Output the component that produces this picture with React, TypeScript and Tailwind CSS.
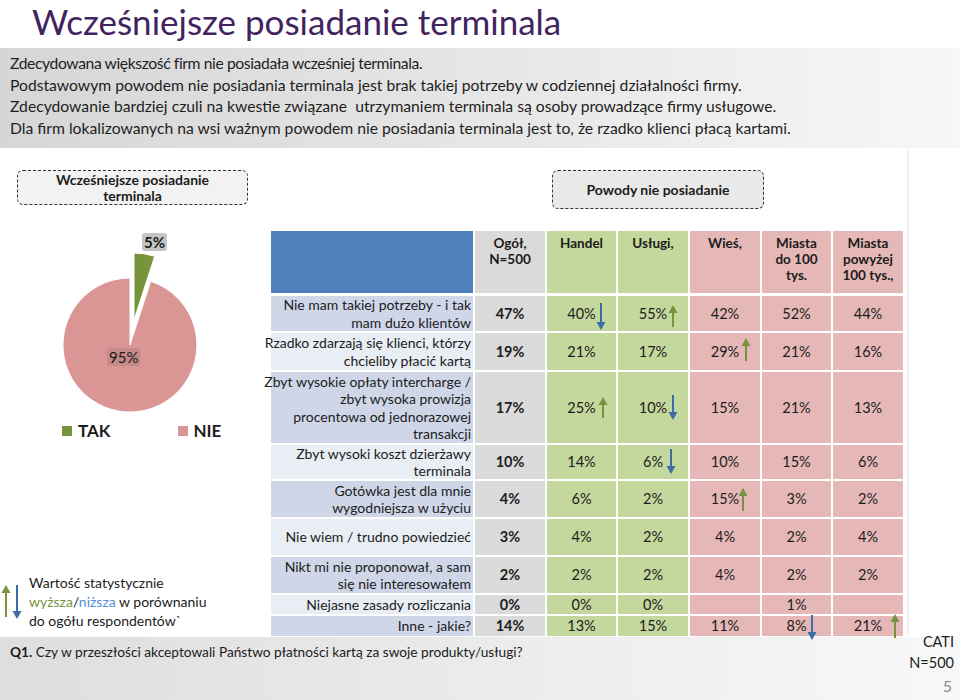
import React from 'react';

type Dir = 'up' | 'down';
type Mark = { col: number; dir: Dir; x: number; top: number; h: number };
type Row = { label: string[]; h: number; vals: string[]; marks?: Mark[] };

const GREEN = '#77933c';
const BLUE = '#3d6da6';

const rows: Row[] = [
    {
        label: ['Nie mam takiej potrzeby - i tak', 'mam dużo klientów'],
        h: 35,
        vals: ['47%', '40%', '55%', '42%', '52%', '44%'],
        marks: [
            { col: 1, dir: 'down', x: 54, top: 7, h: 27 },
            { col: 2, dir: 'up', x: 55, top: 9, h: 22 },
        ],
    },
    {
        label: ['Rzadko zdarzają się klienci, którzy', 'chcieliby płacić kartą'],
        h: 37,
        vals: ['19%', '21%', '17%', '29%', '21%', '16%'],
        marks: [{ col: 3, dir: 'up', x: 56, top: 5, h: 23 }],
    },
    {
        label: ['Zbyt wysokie opłaty intercharge /', 'zbyt wysoka prowizja', 'procentowa od jednorazowej', 'transakcji'],
        h: 71,
        vals: ['17%', '25%', '10%', '15%', '21%', '13%'],
        marks: [
            { col: 1, dir: 'up', x: 56, top: 25, h: 21 },
            { col: 2, dir: 'down', x: 55, top: 23, h: 25 },
        ],
    },
    {
        label: ['Zbyt wysoki koszt dzierżawy', 'terminala'],
        h: 34,
        vals: ['10%', '14%', '6%', '10%', '15%', '6%'],
        marks: [{ col: 2, dir: 'down', x: 53, top: 4, h: 25 }],
    },
    {
        label: ['Gotówka jest dla mnie', 'wygodniejsza w użyciu'],
        h: 36,
        vals: ['4%', '6%', '2%', '15%', '3%', '2%'],
        marks: [{ col: 3, dir: 'up', x: 53, top: 7, h: 23 }],
    },
    { label: ['Nie wiem / trudno powiedzieć'], h: 36, vals: ['3%', '4%', '2%', '4%', '2%', '4%'] },
    { label: ['Nikt mi nie proponował, a sam', 'się nie interesowałem'], h: 36, vals: ['2%', '2%', '2%', '4%', '2%', '2%'] },
    { label: ['Niejasne zasady rozliczania'], h: 19, vals: ['0%', '0%', '0%', '', '1%', ''] },
    {
        label: ['Inne - jakie?'],
        h: 20,
        vals: ['14%', '13%', '15%', '11%', '8%', '21%'],
        marks: [
            { col: 4, dir: 'down', x: 50, top: -1, h: 25 },
            { col: 5, dir: 'up', x: 62, top: -2, h: 24 },
        ],
    },
];

const colBg = ['bg-[#dadada]', 'bg-[#c4d79c]', 'bg-[#c4d79c]', 'bg-[#e5b8b7]', 'bg-[#e5b8b7]', 'bg-[#e5b8b7]'];

function Arrow({ dir, h, color }: { dir: Dir; h: number; color: string }) {
    return (
        <svg width="10" height={h} viewBox={`0 0 10 ${h}`}>
            {dir === 'up' ? (
                <>
                    <rect x="4" y="7" width="2" height={h - 7} fill={color} />
                    <path d="M0.5 8 L5 0 L9.5 8 Z" fill={color} />
                </>
            ) : (
                <>
                    <rect x="4" y="0" width="2" height={h - 7} fill={color} />
                    <path d={`M0.5 ${h - 8} L5 ${h} L9.5 ${h - 8} Z`} fill={color} />
                </>
            )}
        </svg>
    );
}

function PieChart() {
    return (
        <div className="relative h-[216px] w-[260px]">
            <svg width="260" height="216" viewBox="0 0 260 216">
                <path d="M130 140 L150.7 76.3 A67 67 0 1 1 130 73 Z" fill="#d99694" stroke="#fff" strokeWidth="1" />
                <path d="M134 115 L134 48 A67 67 0 0 1 154.7 51.3 Z" fill={GREEN} stroke="#fff" strokeWidth="1" />
            </svg>
            <span className="absolute top-[28px] left-[142px] rounded-[3px] bg-[#c4c4c4] px-[2px] text-[15px] leading-[18px] font-bold text-[#1a1a1a]">
                5%
            </span>
            <span className="absolute top-[143px] left-[107px] rounded-[3px] bg-[#c58a89] px-[2px] text-[15px] leading-[18px] text-[#1a1a1a]">
                95%
            </span>
        </div>
    );
}

export default function App() {
    return (
        <div className="relative h-[700px] w-[960px] overflow-hidden bg-white font-['Lato',sans-serif] text-[#1c1c1c]">
            {/* Title */}
            <div className="h-[48px] pl-[32px]">
                <h1 className="text-[35px] leading-[42px] text-[#41245f]">Wcześniejsze posiadanie terminala</h1>
            </div>

            {/* Summary band */}
            <div className="h-[100px] bg-gradient-to-r from-[#d6d6d6] via-[#e6e6e6] to-[#f7f7f7] pt-[5px] pl-[10px] text-[15.7px] leading-[21.5px] text-[#1e1e1e]">
                <p className="tracking-[-0.4px]">Zdecydowana większość firm nie posiadała wcześniej terminala.</p>
                <p>Podstawowym powodem nie posiadania terminala jest brak takiej potrzeby w codziennej działalności firmy.</p>
                <p>Zdecydowanie bardziej czuli na kwestie związane&nbsp; utrzymaniem terminala są osoby prowadzące firmy usługowe.</p>
                <p>Dla firm lokalizowanych na wsi ważnym powodem nie posiadania terminala jest to, że rzadko klienci płacą kartami.</p>
            </div>

            {/* Main */}
            <div className="flex h-[489px]">
                <div className="flex w-[260px] flex-col">
                    <div className="mt-[22px] ml-[17px] flex h-[35px] w-[231px] flex-col items-center justify-center rounded-[6px] border border-dashed border-[#333] bg-[#f2f2f2] text-[14px] leading-[16px] font-bold">
                        <span>Wcześniejsze posiadanie</span>
                        <span>terminala</span>
                    </div>
                    <PieChart />
                    <div className="flex h-[20px] items-center pl-[62px] text-[17px] font-bold">
                        <span className="h-[10px] w-[10px] bg-[#77933c]" />
                        <span className="ml-[6px]">TAK</span>
                        <span className="ml-[68px] h-[10px] w-[10px] bg-[#d99694]" />
                        <span className="ml-[5px]">NIE</span>
                    </div>
                    <div className="mt-auto flex items-center pb-[7px]">
                        <div className="flex w-[29px] items-start gap-[1px] pl-[1px]">
                            <Arrow dir="up" h={32} color={GREEN} />
                            <Arrow dir="down" h={34} color={BLUE} />
                        </div>
                        <div className="text-[14px] leading-[19px]">
                            <p>Wartość statystycznie</p>
                            <p>
                                <span className="text-[#77933c]">wyższa</span>/<span className="text-[#558ed5]">niższa</span> w porównaniu
                            </p>
                            <p>do ogółu respondentów`</p>
                        </div>
                    </div>
                </div>

                <div className="flex w-[647px] flex-col pl-[11px] shadow-[3px_0_3px_-2px_rgba(0,0,0,0.12)]">
                    <div className="mt-[22px] ml-[281px] flex h-[39px] w-[212px] items-center justify-center rounded-[6px] border border-dashed border-[#333] bg-[#e9e9e9] text-[14px] font-bold">
                        Powody nie posiadanie
                    </div>

                    <div className="mt-[22px] grid grid-cols-[202px_70px_69px_70px_70px_69px_70px] gap-x-[2px] gap-y-[2px]">
                        {/* header */}
                        <div className="mb-[1px] h-[62px] bg-[#4f81bd]" />
                        {[
                            ['Ogół,', 'N=500'],
                            ['Handel'],
                            ['Usługi,'],
                            ['Wieś,'],
                            ['Miasta', 'do 100', 'tys.'],
                            ['Miasta', 'powyżej', '100 tys.,'],
                        ].map((h, i) => (
                            <div key={i} className={`mb-[1px] h-[62px] ${colBg[i]} flex flex-col items-center pt-[4px] text-[13.5px] leading-[16px] font-bold`}>
                                {h.map((t) => (
                                    <span key={t}>{t}</span>
                                ))}
                            </div>
                        ))}

                        {rows.map((r, ri) => (
                            <React.Fragment key={ri}>
                                <div
                                    style={{ height: r.h }}
                                    className={`flex flex-col items-end justify-center pr-[2px] text-right text-[14px] leading-[17.5px] ${
                                        ri % 2 === 0 ? 'bg-[#cfd6e8]' : 'bg-[#e9edf4]'
                                    }`}
                                >
                                    {r.label.map((t) => (
                                        <span key={t} className="whitespace-nowrap">
                                            {t}
                                        </span>
                                    ))}
                                </div>
                                {r.vals.map((v, ci) => {
                                    const m = r.marks?.find((k) => k.col === ci);
                                    return (
                                        <div
                                            key={ci}
                                            style={{ height: r.h }}
                                            className={`relative flex items-center justify-center text-[14.5px] ${colBg[ci]} ${ci === 0 ? 'font-bold' : ''}`}
                                        >
                                            {v}
                                            {m && (
                                                <span className="absolute z-10" style={{ left: m.x - 5, top: m.top }}>
                                                    <Arrow dir={m.dir} h={m.h} color={m.dir === 'up' ? GREEN : BLUE} />
                                                </span>
                                            )}
                                        </div>
                                    );
                                })}
                            </React.Fragment>
                        ))}
                    </div>
                </div>
            </div>

            {/* Footer band */}
            <div className="flex h-[63px] bg-gradient-to-r from-[#dedede] via-[#ebebeb] to-[#f8f8f8]">
                <p className="flex-1 pt-[5px] pl-[10px] text-[13.7px] leading-[19px]">
                    <b>Q1.</b> Czy w przeszłości akceptowali Państwo płatności kartą za swoje produkty/usługi?
                </p>
                <div className="-mt-[6px] flex flex-col items-end pr-[6px] text-[14.5px] leading-[21px]">
                    <span>CATI</span>
                    <span>N=500</span>
                    <span className="mt-[2px] pr-[2px] text-[16px] text-[#8a8a8a]">5</span>
                </div>
            </div>
        </div>
    );
}
